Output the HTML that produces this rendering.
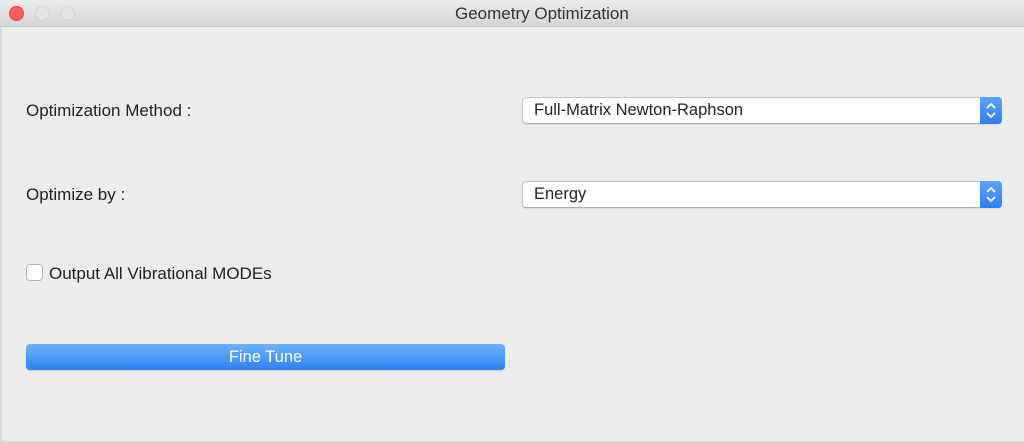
<!DOCTYPE html>
<html><head><style>
*{margin:0;padding:0;box-sizing:border-box}
body{width:1024px;height:443px;background:#ececec;font-family:"Liberation Sans",sans-serif;overflow:hidden;position:relative;color:#222}
.tb{position:absolute;left:0;top:0;width:1024px;height:27px;background:linear-gradient(#ebebeb,#d5d5d5);border-bottom:1px solid #c8c8c8;font-size:17px;line-height:28px;color:#333}
.dot{position:absolute;top:6px;width:15px;height:15px;border-radius:50%;background:#e3e3e3;border:1px solid #d0d0d0}
.lbl{position:absolute;font-size:17px;color:#222}
.sel{position:absolute;left:522px;width:480px;height:27px;background:#fff;border:1px solid #c4c4c4;border-bottom-color:#aaa;border-radius:4px;font-size:16.5px;line-height:25px;padding-left:11px;box-shadow:0 1px 1px rgba(0,0,0,.08)}
.arr{position:absolute;right:-1px;top:-1px;width:22px;height:27px;background:linear-gradient(#5ba4fb,#2b7ff0);border-radius:0 4px 4px 0}
.cb{position:absolute;left:26px;top:264px;width:17px;height:17px;background:#fff;border:1px solid #b5b5b5;border-radius:4px}
.btn{position:absolute;left:26px;top:344px;width:479px;height:26px;border-radius:4px;background:linear-gradient(#6eb1fb,#2d82f2);color:#fff;text-align:center;font-size:16.5px;line-height:26px;box-shadow:0 1px 1px rgba(0,0,0,.15)}
</style></head><body>
<div class="tb"><span style="position:absolute;left:455px;top:0">Geometry Optimization</span>
<div class="dot" style="left:9px;background:#fc605c;border-color:#e2463f"></div>
<div class="dot" style="left:35px"></div>
<div class="dot" style="left:60px"></div>
</div>
<div style="position:absolute;left:0;top:28px;width:2px;height:415px;background:#d8d8d8"></div>
<div style="position:absolute;left:0;top:441px;width:1024px;height:2px;background:#d8d8d8"></div>
<div class="lbl" style="left:26px;top:101px">Optimization Method :</div>
<div class="sel" style="top:97px">Full-Matrix Newton-Raphson<div class="arr"><svg width="22" height="27"><path d="M7 11 L11 7 L15 11 M7 16 L11 20 L15 16" stroke="#fff" stroke-width="1.8" fill="none"/></svg></div></div>
<div class="lbl" style="left:26px;top:185px">Optimize by :</div>
<div class="sel" style="top:181px">Energy<div class="arr"><svg width="22" height="27"><path d="M7 11 L11 7 L15 11 M7 16 L11 20 L15 16" stroke="#fff" stroke-width="1.8" fill="none"/></svg></div></div>
<div class="cb"></div>
<div class="lbl" style="left:49px;top:264px">Output All Vibrational MODEs</div>
<div class="btn">Fine Tune</div>
</body></html>
